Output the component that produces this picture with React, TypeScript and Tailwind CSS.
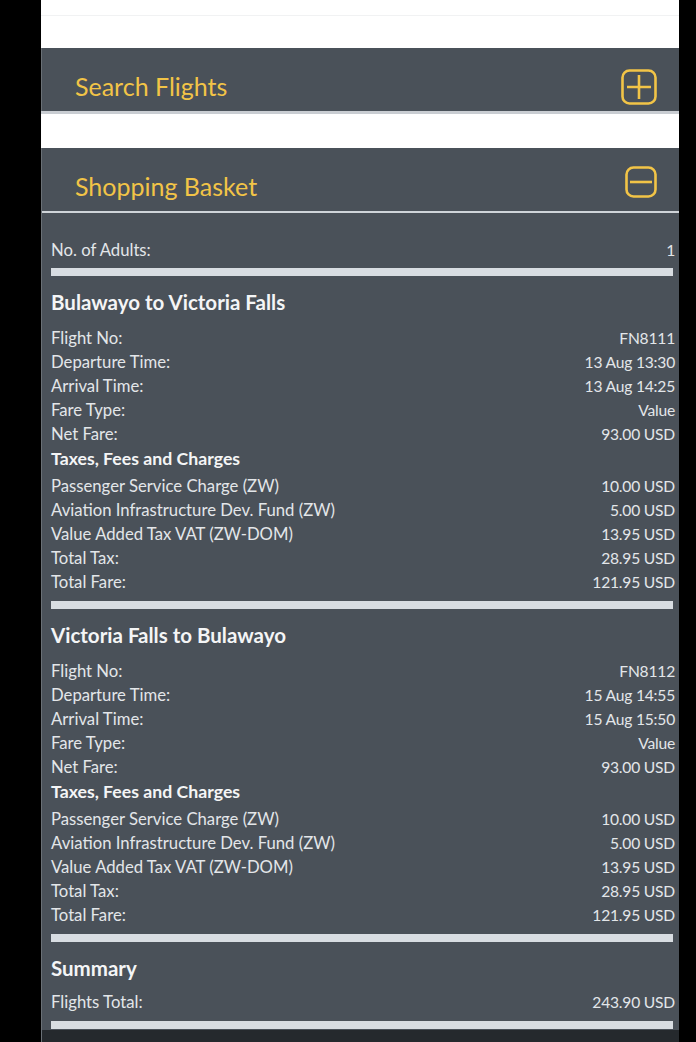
import React from "react";

type Row = { label: string; value: string };

const font = { fontFamily: "Lato, 'Open Sans', sans-serif" };

const PlusBox = () => (
  <svg width="36" height="36" viewBox="0 0 36 36" fill="none">
    <rect x="1.5" y="1.5" width="33" height="33" rx="7" stroke="#f2c447" strokeWidth="2.6" />
    <path d="M18 6v24M6 18h24" stroke="#f2c447" strokeWidth="2.6" />
  </svg>
);

const MinusBox = () => (
  <svg width="32" height="32" viewBox="0 0 32 32" fill="none">
    <rect x="1.5" y="1.5" width="29" height="29" rx="7" stroke="#f2c447" strokeWidth="2.6" />
    <path d="M5 16h22" stroke="#f2c447" strokeWidth="2.6" />
  </svg>
);

const Divider = ({ className = "" }: { className?: string }) => (
  <div className={`h-[8px] mr-[2px] bg-[#d8dde2] ${className}`} />
);

const LineItem = ({ label, value }: Row) => (
  <div className="flex h-[24px] items-center justify-between leading-[24px]">
    <span className="text-[16.7px]">{label}</span>
    <span className="text-[15.6px] tracking-[-0.2px]">{value}</span>
  </div>
);

const Heading = ({ children }: { children: React.ReactNode }) => (
  <h3 className="mt-[14px] h-[24px] text-[20.5px] font-bold leading-[24px] text-[#f4f5f6]">
    {children}
  </h3>
);

const Leg = (props: {
  title: string;
  flight: string;
  dep: string;
  arr: string;
}) => {
  const top: Row[] = [
    { label: "Flight No:", value: props.flight },
    { label: "Departure Time:", value: props.dep },
    { label: "Arrival Time:", value: props.arr },
    { label: "Fare Type:", value: "Value" },
    { label: "Net Fare:", value: "93.00 USD" },
  ];
  const taxes: Row[] = [
    { label: "Passenger Service Charge (ZW)", value: "10.00 USD" },
    { label: "Aviation Infrastructure Dev. Fund (ZW)", value: "5.00 USD" },
    { label: "Value Added Tax VAT (ZW-DOM)", value: "13.95 USD" },
    { label: "Total Tax:", value: "28.95 USD" },
    { label: "Total Fare:", value: "121.95 USD" },
  ];
  return (
    <div>
      <Heading>{props.title}</Heading>
      <div className="mt-[12px]">
        {top.map((r) => (
          <LineItem key={r.label} {...r} />
        ))}
        <div className="h-[28px] text-[17.7px] font-bold leading-[26px] text-[#f4f5f6]">
          Taxes, Fees and Charges
        </div>
        {taxes.map((r) => (
          <LineItem key={r.label} {...r} />
        ))}
      </div>
      <Divider className="mt-[7px]" />
    </div>
  );
};

export default function App() {
  return (
    <div className="flex h-[1042px] w-full overflow-hidden bg-black" style={font}>
      <div className="w-[41px] shrink-0" />
      <main className="flex w-[638px] shrink-0 flex-col bg-white">
        {/* top strip */}
        <div className="h-[48px] pt-[15px]">
          <div className="h-px bg-[#f1f2f3]" />
        </div>

        {/* Search Flights accordion (collapsed) */}
        <div className="flex h-[63px] items-center justify-between border-l border-[#6a7076] bg-[#4a5159] pl-[33px] pr-[22px]">
          <span className="pt-[14px] text-[25px] text-[#f2c447]">Search Flights</span>
          <div className="pt-[14px]">
            <PlusBox />
          </div>
        </div>
        <div className="h-[3px] bg-[#c9cdd2]" />
        <div className="h-[34px]" />

        {/* Shopping Basket accordion (open) */}
        <div className="flex flex-1 flex-col border-l border-[#6a7076] bg-[#4a5159]">
          <div className="flex h-[63px] items-center justify-between pl-[33px] pr-[22px]">
            <span className="pt-[14px] text-[25px] text-[#f2c447]">Shopping Basket</span>
            <div className="pt-[4px]">
              <MinusBox />
            </div>
          </div>
          <div className="h-[2px] bg-[#cfd4d9]" />

          <div className="pl-[9px] pr-[4px] text-[#e3e6e9]">
            <div className="mt-[25px]">
              <LineItem label="No. of Adults:" value="1" />
            </div>
            <Divider className="mt-[6px]" />

            <Leg
              title="Bulawayo to Victoria Falls"
              flight="FN8111"
              dep="13 Aug 13:30"
              arr="13 Aug 14:25"
            />
            <Leg
              title="Victoria Falls to Bulawayo"
              flight="FN8112"
              dep="15 Aug 14:55"
              arr="15 Aug 15:50"
            />

            <Heading>Summary</Heading>
            <div className="mt-[10px]">
              <LineItem label="Flights Total:" value="243.90 USD" />
            </div>
            <Divider className="mt-[7px]" />
          </div>
          <div className="mt-auto h-[12px] bg-[#25292d]" />
        </div>
      </main>
      <div className="flex-1" />
    </div>
  );
}
